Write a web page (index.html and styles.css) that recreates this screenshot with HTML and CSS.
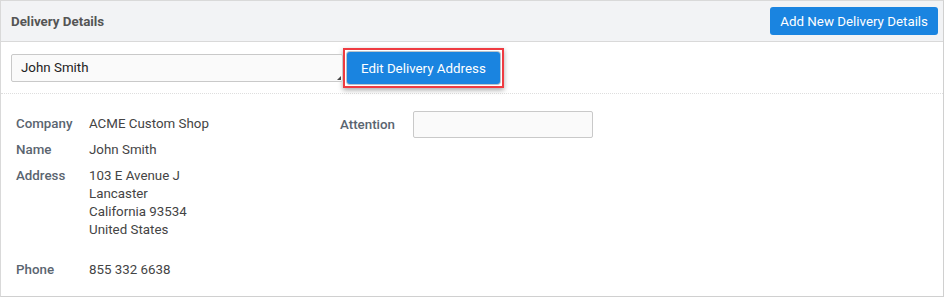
FILE: index.html
```html
<!DOCTYPE html>
<html lang="en">
<head>
    <meta charset="UTF-8">
    <title>Delivery Details</title>
    <link rel="stylesheet" href="styles.css">
</head>
<body>
    <div class="panel">
        <div class="panel-header">
            <div class="panel-title">Delivery Details</div>
            <button class="btn">Add New Delivery Details</button>
        </div>

        <!-- Choix de l'adresse -->
        <div class="toolbar">
            <div class="select">John Smith<span class="grip"></span></div>
            <div class="highlight">
                <button class="btn btn-edit">Edit Delivery Address</button>
            </div>
        </div>

        <!-- Détails -->
        <div class="details">
            <div class="col">
                <div class="row">
                    <div class="label">Company</div>
                    <div class="value">ACME Custom Shop</div>
                </div>
                <div class="row">
                    <div class="label">Name</div>
                    <div class="value">John Smith</div>
                </div>
                <div class="row row-address">
                    <div class="label">Address</div>
                    <div class="value">103 E Avenue J<br>Lancaster<br>California 93534<br>United States</div>
                </div>
                <div class="row">
                    <div class="label">Phone</div>
                    <div class="value">855 332 6638</div>
                </div>
            </div>
            <div class="col col-right">
                <div class="row">
                    <div class="label">Attention</div>
                    <input type="text" class="input">
                </div>
            </div>
        </div>
    </div>
</body>
</html>
```

FILE: styles.css
```css
body {
    margin: 0;
    font-family: Roboto, "Liberation Sans", sans-serif;
    font-size: 13.33px;
    background-color: #fff;
}

.panel {
    width: 942px;
    height: 295px;
    border: 1px solid #d9d9d9;
    border-right-color: #d0d0d0;
    border-bottom-color: #d0d0d0;
}

.panel-header {
    display: flex;
    justify-content: space-between;
    align-items: center;
    height: 40px;
    padding: 0 5px 0 10px;
    background-color: #f2f3f5;
    border-bottom: 1px solid #d9d9d9;
}

.panel-title {
    font-weight: 700;
    color: #555;
}

.btn {
    font-family: inherit;
    font-size: 13.33px;
    color: #fff;
    background-color: #1a84e0;
    border: none;
    border-radius: 3px;
    height: 28px;
    padding: 0 10px;
}

.toolbar {
    display: flex;
    align-items: center;
    padding: 6px 10px 5px 10px;
    border-bottom: 1px dotted #dedede;
}

.select {
    position: relative;
    width: 321px;
    height: 26px;
    line-height: 26px;
    padding-left: 9px;
    color: #222;
    background-color: #fafafa;
    border: 1px solid #c9c9c9;
    border-radius: 2px;
}

.grip {
    position: absolute;
    right: 1px;
    bottom: 1px;
    width: 0;
    height: 0;
    border-left: 4px solid transparent;
    border-bottom: 4px solid #444;
}

.highlight {
    border: 2px solid #ef3b41;
    padding: 2px;
    box-shadow: 0 2px 5px rgba(0, 0, 0, 0.35);
}

.btn-edit {
    display: block;
    height: 32px;
    padding: 0 14px;
    box-shadow: 0 0 0 1px #b9c3cc;
}

.details {
    display: flex;
    padding: 21px 0 0 15px;
}

.col {
    width: 324px;
}

.row {
    display: flex;
    align-items: flex-start;
    margin-bottom: 8px;
    line-height: 18px;
}

.row-address {
    margin-bottom: 22px;
}

.label {
    width: 73px;
    flex-shrink: 0;
    font-weight: 500;
    color: #5a6570;
}

.value {
    color: #444;
}

.col-right .row {
    align-items: center;
    margin-top: -4px;
}

.input {
    width: 178px;
    height: 25px;
    margin: 0;
    padding: 0;
    border: 1px solid #c9c9c9;
    border-radius: 2px;
    background-color: #fafafa;
}
```
